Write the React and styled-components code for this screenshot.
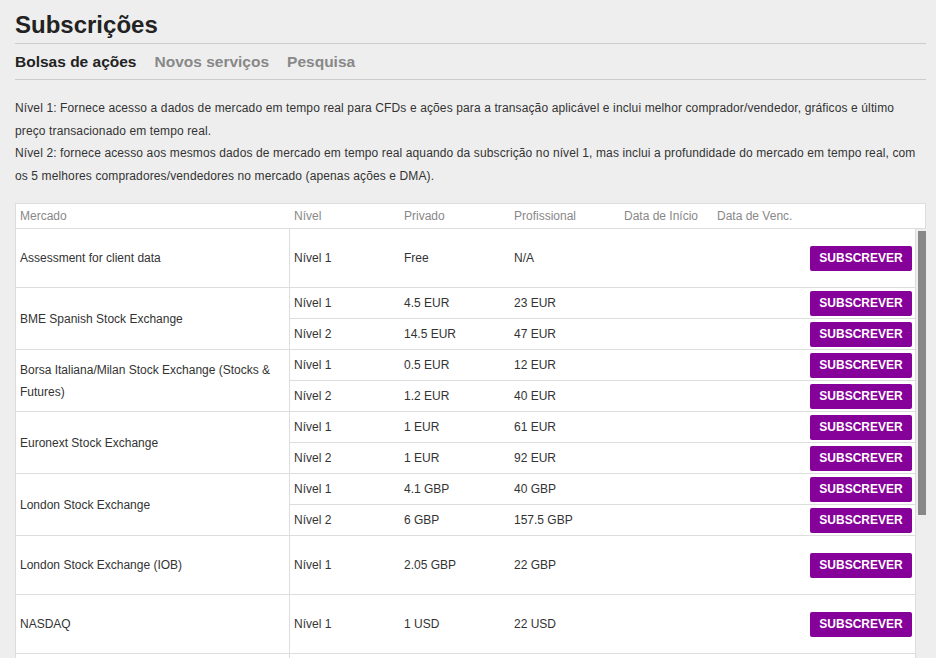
import React from "react"
import styled, { createGlobalStyle } from "styled-components"

const GlobalStyle = createGlobalStyle`
  html, body {
    margin: 0;
    padding: 0;
    background: #eeeeee;
    overflow: hidden;
    font-family: "Liberation Sans", Arial, sans-serif;
    color: #333;
  }
`

const Page = styled.div`
  margin: 0 10px 0 15px;
`

const Title = styled.h1`
  margin: 0;
  padding: 10px 0 3px;
  font-size: 24px;
  line-height: 30px;
  font-weight: bold;
  color: #222;
  border-bottom: 1px solid #ccc;
`

const Tabs = styled.div`
  display: flex;
  gap: 18px;
  border-bottom: 1px solid #ccc;
`

const Tab = styled.span`
  font-size: 15.5px;
  line-height: 35px;
  font-weight: bold;
  color: ${(p) => (p.$active ? "#222" : "#888")};
  cursor: pointer;
`

const Intro = styled.div`
  padding-top: 17px;
  font-size: 12px;
  line-height: 22.5px;
  letter-spacing: 0.12px;
  color: #333;
  white-space: nowrap;
`

const Table = styled.div`
  margin-top: 16px;
`

const HeadRow = styled.div`
  display: grid;
  grid-template-columns: 274px 110px 110px 110px 93px 1fr;
  padding-left: 4px;
  height: 24px;
  align-items: center;
  background: #fff;
  border: 1px solid #ddd;
  font-size: 12px;
  color: #888;
`

const BodyWrap = styled.div`
  display: flex;
  height: 429px;
  overflow: hidden;
`

const Rows = styled.div`
  flex: 1;
  overflow: hidden;
  border-left: 1px solid #ddd;
`

const Track = styled.div`
  width: 8px;
  flex: none;
  padding: 2px 0 0 2px;
`

const Thumb = styled.div`
  height: 284px;
  background: #888;
`

const Group = styled.div`
  display: grid;
  grid-template-columns: 274px 1fr;
  background: #fff;
  border-bottom: 1px solid #ddd;
  border-right: 1px solid #ddd;
`

const Market = styled.div`
  display: flex;
  align-items: center;
  padding: 0 10px 0 4px;
  border-right: 1px solid #ddd;
  font-size: 12px;
  line-height: 22px;
  color: #333;
`

const Levels = styled.div`
  display: flex;
  flex-direction: column;
`

const LevelRow = styled.div`
  display: grid;
  grid-template-columns: 110px 110px 110px 93px 1fr auto;
  align-items: center;
  height: ${(p) => (p.$tall ? "58px" : "30px")};
  padding: 0 3px 0 4px;
  font-size: 12px;
  color: #333;

  & + & {
    border-top: 1px solid #ddd;
  }
`

const Button = styled.button`
  width: 102px;
  height: 25px;
  border: none;
  border-radius: 2px;
  background: #86009a;
  color: #fff;
  font-family: "Liberation Sans", Arial, sans-serif;
  font-size: 12px;
  font-weight: bold;
  cursor: pointer;
  padding: 0;
`

const markets = [
  { name: "Assessment for client data", levels: [["Nível 1", "Free", "N/A"]] },
  { name: "BME Spanish Stock Exchange", levels: [["Nível 1", "4.5 EUR", "23 EUR"], ["Nível 2", "14.5 EUR", "47 EUR"]] },
  { name: "Borsa Italiana/Milan Stock Exchange (Stocks & Futures)", levels: [["Nível 1", "0.5 EUR", "12 EUR"], ["Nível 2", "1.2 EUR", "40 EUR"]] },
  { name: "Euronext Stock Exchange", levels: [["Nível 1", "1 EUR", "61 EUR"], ["Nível 2", "1 EUR", "92 EUR"]] },
  { name: "London Stock Exchange", levels: [["Nível 1", "4.1 GBP", "40 GBP"], ["Nível 2", "6 GBP", "157.5 GBP"]] },
  { name: "London Stock Exchange (IOB)", levels: [["Nível 1", "2.05 GBP", "22 GBP"]] },
  { name: "NASDAQ", levels: [["Nível 1", "1 USD", "22 USD"]] },
  { name: "NYSE", levels: [["Nível 1", "1 USD", "22 USD"]] },
]

const App = () => (
  <>
    <GlobalStyle />
    <Page>
      <Title>Subscrições</Title>
      <Tabs>
        <Tab $active>Bolsas de ações</Tab>
        <Tab>Novos serviços</Tab>
        <Tab>Pesquisa</Tab>
      </Tabs>

      <Intro>
        Nível 1: Fornece acesso a dados de mercado em tempo real para CFDs e ações para a transação aplicável e inclui melhor comprador/vendedor, gráficos e último
        <br />
        preço transacionado em tempo real.
        <br />
        Nível 2: fornece acesso aos mesmos dados de mercado em tempo real aquando da subscrição no nível 1, mas inclui a profundidade do mercado em tempo real, com
        <br />
        os 5 melhores compradores/vendedores no mercado (apenas ações e DMA).
      </Intro>

      <Table>
        <HeadRow>
          <span>Mercado</span>
          <span>Nível</span>
          <span>Privado</span>
          <span>Profissional</span>
          <span>Data de Início</span>
          <span>Data de Venc.</span>
        </HeadRow>
        <BodyWrap>
          <Rows>
            {markets.map((m) => (
              <Group key={m.name}>
                <Market>{m.name}</Market>
                <Levels>
                  {m.levels.map(([lvl, priv, pro]) => (
                    <LevelRow key={lvl} $tall={m.levels.length === 1}>
                      <span>{lvl}</span>
                      <span>{priv}</span>
                      <span>{pro}</span>
                      <span></span>
                      <span></span>
                      <Button>SUBSCREVER</Button>
                    </LevelRow>
                  ))}
                </Levels>
              </Group>
            ))}
          </Rows>
          <Track>
            <Thumb />
          </Track>
        </BodyWrap>
      </Table>
    </Page>
  </>
)

export default App
